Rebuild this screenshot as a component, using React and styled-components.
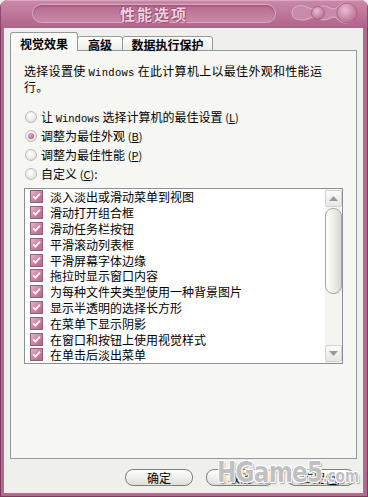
import React from 'react'
import styled, { createGlobalStyle } from 'styled-components'

const GlobalStyle = createGlobalStyle`
  html, body {
    margin: 0;
    padding: 0;
    background: #efefec;
  }
  body {
    font-family: "Noto Sans CJK SC", "Liberation Sans", sans-serif;
    font-size: 12px;
    color: #000;
  }
`

const effects = [
  '淡入淡出或滑动菜单到视图',
  '滑动打开组合框',
  '滑动任务栏按钮',
  '平滑滚动列表框',
  '平滑屏幕字体边缘',
  '拖拉时显示窗口内容',
  '为每种文件夹类型使用一种背景图片',
  '显示半透明的选择长方形',
  '在菜单下显示阴影',
  '在窗口和按钮上使用视觉样式',
  '在单击后淡出菜单',
]

const App = () => {
  const modes = [
    { label: <>让 <Latin>Windows</Latin> 选择计算机的最佳设置</>, key: 'L' },
    { label: '调整为最佳外观', key: 'B', checked: true },
    { label: '调整为最佳性能', key: 'P' },
    { label: '自定义', key: 'C', colon: true },
  ]

  return (
    <>
      <GlobalStyle />
      <Window>
        <TitleBar>
          <TitlePill>
            <TitleText>性能选项</TitleText>
          </TitlePill>
          <Ornament width="72" height="24" viewBox="0 0 72 24">
            <defs>
              <radialGradient id="orb" cx="0.4" cy="0.35" r="0.7">
                <stop offset="0" stopColor="#e8bdd0" />
                <stop offset="1" stopColor="#b56a8d" />
              </radialGradient>
            </defs>
            <path
              d="M4 12c0-6 6-8 12-7 4 1 6 3 10 3s6-3 10-3c4 0 6 3 10 3 3 0 5-6 12-6 6 0 10 4 10 10s-4 10-10 10c-7 0-9-6-12-6-4 0-6 3-10 3s-6-3-10-3-6 3-10 3C10 19 4 18 4 12z"
              fill="#c98aa7"
              stroke="#e0b1c6"
              strokeWidth="1"
            />
            <circle cx="30" cy="12" r="6.5" fill="url(#orb)" stroke="#a8577e" strokeWidth="0.8" />
            <circle cx="59" cy="12" r="10" fill="url(#orb)" stroke="#a8577e" strokeWidth="0.8" />
          </Ornament>
        </TitleBar>
        <Frame>
          <Client>
            <TabRow>
              <Tab $active $w={68}>视觉效果</Tab>
              <Tab $w={46}>高级</Tab>
              <Tab $w={91}>数据执行保护</Tab>
            </TabRow>
            <Panel>
              <Description>
                选择设置使 <Latin>Windows</Latin> 在此计算机上以最佳外观和性能运<br />行。
              </Description>
              <RadioGroup>
                {modes.map((m) => (
                  <RadioRow key={m.key}>
                    <Radio $checked={m.checked} />
                    <span>
                      {m.label} <Hotkey>(<u>{m.key}</u>)</Hotkey>{m.colon ? ':' : ''}
                    </span>
                  </RadioRow>
                ))}
              </RadioGroup>
              <ListBox>
                <Items>
                  {effects.map((e) => (
                    <Item key={e}>
                      <Check>
                        <svg width="9" height="9" viewBox="0 0 9 9">
                          <path d="M1.2 4.4l2.2 2.3L8 1.6" fill="none" stroke="#fff4f8" strokeWidth="1.8" />
                        </svg>
                      </Check>
                      {e}
                    </Item>
                  ))}
                </Items>
                <ScrollBar>
                  <ScrollBtn>
                    <svg width="9" height="5" viewBox="0 0 9 5"><path d="M0 5L4.5 0 9 5z" fill="#9a9a9a" /></svg>
                  </ScrollBtn>
                  <Thumb />
                  <Track />
                  <ScrollBtn>
                    <svg width="9" height="5" viewBox="0 0 9 5"><path d="M0 0L4.5 5 9 0z" fill="#9a9a9a" /></svg>
                  </ScrollBtn>
                </ScrollBar>
              </ListBox>
            </Panel>
            <Footer>
              <Button>确定</Button>
              <Button>取消</Button>
              <Button>应用(<u>A</u>)</Button>
            </Footer>
          </Client>
        </Frame>
        <Watermark>
          HGame5<small>.com</small>
        </Watermark>
      </Window>
    </>
  )
}

const Window = styled.div`
  position: relative;
  width: 368px;
  height: 497px;
  display: flex;
  flex-direction: column;
  border-radius: 8px 8px 0 0;
  overflow: hidden;
  background: #b06890;
`

const TitleBar = styled.div`
  flex: none;
  height: 28px;
  display: flex;
  align-items: center;
  padding-left: 32px;
  box-sizing: border-box;
  background: linear-gradient(to bottom, #c98aa8 0%, #bf7899 45%, #b0638a 100%);
  box-shadow: inset 0 1px 0 #dba7bf, inset 1px 0 0 #8d4a6d, inset -1px 0 0 #8d4a6d;
`

const TitlePill = styled.div`
  width: 244px;
  height: 19px;
  box-sizing: border-box;
  margin-top: -1px;
  border-radius: 10px;
  border: 1px solid #dcaac1;
  background: linear-gradient(to bottom, #b86a8f, #c78aa7);
  box-shadow: inset 0 1px 2px rgba(90, 20, 55, 0.35);
  display: flex;
  align-items: center;
  justify-content: center;
`

const TitleText = styled.span`
  font-size: 15px;
  font-weight: 700;
  letter-spacing: 2px;
  color: #efd2df;
  text-shadow: 0 0 1px #8a3d63, 1px 1px 0 #9b5075, -1px -1px 0 #a55a7e;
  line-height: 17px;
`

const Ornament = styled.svg`
  margin-left: 12px;
  margin-top: -2px;
`

const Frame = styled.div`
  flex: 1;
  display: flex;
  padding: 0 4px 3px 3px;
  border-left: 1px solid #7c3b5c;
  border-right: 1px solid #7c3b5c;
  border-bottom: 1px solid #7c3b5c;
  background: #b26b8f;
`

const Client = styled.div`
  flex: 1;
  display: flex;
  flex-direction: column;
  padding: 4px 6px 0 6px;
  background: #efefec;
`

const TabRow = styled.div`
  display: flex;
  align-items: flex-end;
  height: 19px;
  margin-bottom: -1px;
  position: relative;
  z-index: 1;
`

const Tab = styled.div`
  width: ${(p) => p.$w}px;
  height: ${(p) => (p.$active ? 19 : 15)}px;
  box-sizing: border-box;
  display: flex;
  align-items: center;
  justify-content: center;
  padding-top: ${(p) => (p.$active ? 3 : 2)}px;
  margin-left: ${(p) => (p.$active ? 0 : -1)}px;
  border: 1px solid #919b9c;
  border-bottom: ${(p) => (p.$active ? 'none' : '1px solid #919b9c')};
  border-radius: 3px 3px 0 0;
  background: ${(p) => (p.$active ? '#fafaf8' : 'linear-gradient(to bottom, #ffffff, #ecece8)')};
  font-weight: 700;
  font-size: 12px;
  line-height: 14px;
`

const Panel = styled.div`
  height: 409px;
  flex: none;
  box-sizing: border-box;
  border: 1px solid #919b9c;
  background: #f6f6f3;
  padding: 12px 13px 0 13px;
  display: flex;
  flex-direction: column;
`

const Latin = styled.span`
  font-family: "Liberation Mono", monospace;
  font-size: 10.5px;
  line-height: 1;
`

const Description = styled.div`
  height: 32px;
  line-height: 16px;
  letter-spacing: 0.3px;
  overflow: hidden;
`

const RadioGroup = styled.div`
  margin-top: 12px;
  display: flex;
  flex-direction: column;
`

const RadioRow = styled.div`
  height: 19px;
  display: flex;
  align-items: center;
  gap: 4px;
  padding-left: 1px;
  line-height: 16px;
`

const Radio = styled.span`
  position: relative;
  width: 12px;
  height: 12px;
  box-sizing: border-box;
  border-radius: 50%;
  border: 1px solid #b9b9b6;
  background: radial-gradient(circle at 40% 35%, #ffffff 0%, #e9e9e6 60%, #cfcfcc 100%);

  &::after {
    content: '';
    display: ${(p) => (p.$checked ? 'block' : 'none')};
    position: absolute;
    left: 2px;
    top: 2px;
    width: 6px;
    height: 6px;
    border-radius: 50%;
    background: radial-gradient(circle at 35% 35%, #e3a6c2, #a4517a);
  }
`

const Hotkey = styled.span`
  font-size: 11px;
`

const ListBox = styled.div`
  margin-top: 5px;
  width: 319px;
  height: 176px;
  flex: none;
  box-sizing: border-box;
  border: 1px solid #8c8f94;
  background: #fff;
  display: flex;
`

const Items = styled.div`
  flex: 1;
  overflow: hidden;
`

const Item = styled.div`
  height: 15.8px;
  display: flex;
  align-items: center;
  gap: 7px;
  padding-left: 5px;
  line-height: 15px;
  white-space: nowrap;
`

const Check = styled.span`
  width: 13px;
  height: 13px;
  box-sizing: border-box;
  border: 1px solid #9a5a7a;
  background: linear-gradient(135deg, #e2b3c8 0%, #c7819f 55%, #b06a8c 100%);
  display: flex;
  align-items: center;
  justify-content: center;
`

const ScrollBar = styled.div`
  width: 17px;
  display: flex;
  flex-direction: column;
  padding: 1px 0;
  background: #f4f4f1;
`

const ScrollBtn = styled.div`
  height: 17px;
  flex: none;
  box-sizing: border-box;
  border: 1px solid #d2d2ce;
  border-radius: 2px;
  background: linear-gradient(to bottom, #fbfbfa, #e6e6e2);
  display: flex;
  align-items: center;
  justify-content: center;
`

const Thumb = styled.div`
  height: 86px;
  flex: none;
  margin-top: 1px;
  box-sizing: border-box;
  border: 1px solid #a7a7a4;
  border-radius: 8px;
  background: linear-gradient(to right, #ffffff, #e4e4e0 70%, #d6d6d2);
`

const Track = styled.div`
  flex: 1;
`

const Footer = styled.div`
  display: flex;
  justify-content: flex-end;
  gap: 13px;
  margin-top: 10px;
  padding-right: 2px;
`

const Button = styled.div`
  width: 68px;
  height: 17px;
  box-sizing: border-box;
  border: 1px solid #7e7e7c;
  border-radius: 8px;
  background: linear-gradient(to bottom, #ffffff, #ececea 60%, #dcdcd8);
  display: flex;
  align-items: center;
  justify-content: center;
  font-size: 12px;
  line-height: 14px;
`

const Watermark = styled.div`
  position: absolute;
  left: 217px;
  top: 456px;
  font-family: "DejaVu Sans", "Liberation Sans", sans-serif;
  font-weight: 700;
  font-size: 29px;
  line-height: 32px;
  letter-spacing: -1px;
  color: rgba(175, 175, 178, 0.8);
  text-shadow: 1px 1px 0 #fff, -1px -1px 0 #fff, 1px -1px 0 #fff, -1px 1px 0 #fff, 2px 2px 1px rgba(100, 100, 100, 0.5);
  transform: scaleX(0.8);
  transform-origin: left center;
  white-space: nowrap;
  pointer-events: none;

  small {
    font-size: 17px;
    letter-spacing: 0;
  }
`

export default App
